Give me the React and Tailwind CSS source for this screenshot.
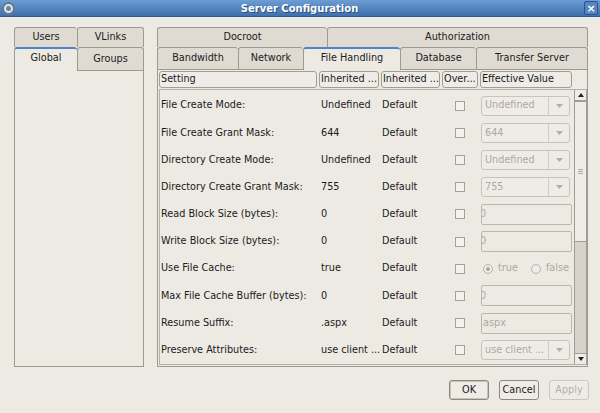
import React from 'react';

const rows = [
  { label: 'File Create Mode:', inherited: 'Undefined', kind: 'combo', value: 'Undefined' },
  { label: 'File Create Grant Mask:', inherited: '644', kind: 'combo', value: '644' },
  { label: 'Directory Create Mode:', inherited: 'Undefined', kind: 'combo', value: 'Undefined' },
  { label: 'Directory Create Grant Mask:', inherited: '755', kind: 'combo', value: '755' },
  { label: 'Read Block Size (bytes):', inherited: '0', kind: 'text', value: '0' },
  { label: 'Write Block Size (bytes):', inherited: '0', kind: 'text', value: '0' },
  { label: 'Use File Cache:', inherited: 'true', kind: 'radio' },
  { label: 'Max File Cache Buffer (bytes):', inherited: '0', kind: 'text', value: '0' },
  { label: 'Resume Suffix:', inherited: '.aspx', kind: 'text', value: '.aspx' },
  { label: 'Preserve Attributes:', inherited: 'use client ...', kind: 'combo', value: 'use client ...' },
];

// Unselected / selected notebook tabs
const Tab = ({ label, width, height, selected, last }) => (
  <div
    className={
      'flex items-center justify-center border-t border-l border-[#9f9a90] rounded-t-[3px] ' +
      (last ? 'border-r ' : '') +
      (selected
        ? 'relative z-10 -mb-px bg-[#edeae4] border-t-2 border-t-[#4f85c6] pb-[3px]'
        : 'bg-[#dfdbd3]')
    }
    style={{ width, height: selected ? height + 1 : height }}
  >
    {label}
  </div>
);

const HeaderCell = ({ label, width }) => (
  <div
    className="h-[17px] flex items-center pl-[1px] border border-[#a29d93] rounded-[3px] bg-[#efece7] overflow-hidden whitespace-nowrap"
    style={{ width }}
  >
    {label}
  </div>
);

const Combo = ({ value }) => (
  <div className="w-[89px] h-[20px] flex border border-[#c9c4ba] rounded-[3px] bg-[#efece7] text-[#aca89e]">
    <div className="flex-1 flex items-center pl-[3px] overflow-hidden whitespace-nowrap">{value}</div>
    <div className="w-[21px] flex items-center justify-center border-l border-[#d2cdc4]">
      <svg width="7" height="4" viewBox="0 0 7 4">
        <path d="M0 0h7L3.5 4z" fill="#b3aea4" />
      </svg>
    </div>
  </div>
);

const TextBox = ({ value }) => (
  <div className="w-[91px] h-[21px] flex items-center border border-[#bcb7ac] rounded-[2px] bg-[#edeae4] text-[#aca89e] overflow-hidden whitespace-nowrap">
    <span className="-ml-[2px]">{value}</span>
  </div>
);

const Radio = ({ on }) => (
  <div className="w-[10px] h-[10px] rounded-full border border-[#b9b4aa] flex items-center justify-center bg-[#efece7]">
    {on && <div className="w-[4px] h-[4px] rounded-full bg-[#aca89e]" />}
  </div>
);

const Row = ({ row }) => (
  <div className="h-[27.2px] flex items-center whitespace-nowrap">
    <div className="w-[160px] pl-px">{row.label}</div>
    <div className="w-[61px] pl-px overflow-hidden">{row.inherited}</div>
    <div className="w-[61px] pl-px">Default</div>
    <div className="w-[38px] pl-[13px]">
      <div className="w-[10px] h-[10px] border border-[#a7a297] bg-[#f4f2ee]" />
    </div>
    <div className="pl-[1px]">
      {row.kind === 'combo' && <Combo value={row.value} />}
      {row.kind === 'text' && <TextBox value={row.value} />}
      {row.kind === 'radio' && (
        <div className="flex items-center text-[#aca89e] pl-[2px]">
          <Radio on />
          <span className="ml-[5px]">true</span>
          <div className="ml-[13px]"><Radio /></div>
          <span className="ml-[5px]">false</span>
        </div>
      )}
    </div>
  </div>
);

const ScrollArrow = ({ up }) => (
  <div className="h-[10px] flex items-center justify-center bg-[#efece7]">
    <svg width="6" height="4" viewBox="0 0 6 4">
      <path d={up ? 'M0 4h6L3 0z' : 'M0 0h6L3 4z'} fill="#222" />
    </svg>
  </div>
);

const Button = ({ label, disabled, isDefault }) => (
  <div
    className={
      'h-[20px] w-[40px] flex items-center justify-center rounded-[3px] border bg-[#efece7] ' +
      (disabled
        ? 'border-[#cdc8bf] text-[#b3afa6]'
        : isDefault
          ? 'border-[#8e897f] shadow-[inset_0_0_0_1px_#c9c4ba]'
          : 'border-[#8e897f]')
    }
  >
    {label}
  </div>
);

export default function App() {
  return (
    <div
      className="w-[600px] h-[413px] bg-[#edeae4] text-[#1a1a1a] text-[9.7px] overflow-hidden"
      style={{ fontFamily: '"DejaVu Sans", Verdana, sans-serif' }}
    >
      {/* Title bar */}
      <div className="h-[17px] flex items-center bg-gradient-to-b from-[#6d9dd4] to-[#3f70ad] border-b border-[#2f5a92] px-[2px]">
        <div className="w-[13px] h-[13px] rounded-full bg-[#dfe5ec] border-2 border-[#6b7785] flex items-center justify-center">
          <div className="w-[5px] h-[5px] rounded-full bg-[#5b86b8]" />
        </div>
        <div className="flex-1 text-center text-white font-bold text-[10px] [text-shadow:1px_1px_0_#2b4f7e]">
          Server Configuration
        </div>
        <div className="w-[14px] h-[14px] rounded-[2px] border border-[#2d5288] bg-[#5686c1] flex items-center justify-center text-white font-bold text-[11px] leading-none">
          ×
        </div>
      </div>

      {/* Body */}
      <div className="flex pt-[10px] pl-[14px]">
        {/* Left notebook */}
        <div className="w-[130px] flex flex-col">
          <div className="flex">
            <Tab label="Users" width={63} height={20} />
            <Tab label="VLinks" width={67} height={20} last />
          </div>
          <div className="flex items-end h-[23px]">
            <Tab label="Global" width={63} height={23} selected />
            <Tab label="Groups" width={67} height={23} last />
          </div>
          <div className="h-[297px] border border-[#9f9a90] bg-[#edeae4]" />
        </div>

        {/* Right notebook */}
        <div className="w-[431px] ml-[13px] flex flex-col">
          <div className="flex">
            <Tab label="Docroot" width={170} height={20} />
            <Tab label="Authorization" width={261} height={20} last />
          </div>
          <div className="flex items-end h-[22px]">
            <Tab label="Bandwidth" width={81} height={22} />
            <Tab label="Network" width={65} height={22} />
            <Tab label="File Handling" width={97} height={22} selected />
            <Tab label="Database" width={76} height={22} />
            <Tab label="Transfer Server" width={112} height={22} last />
          </div>
          <div className="h-[298px] border border-[#9f9a90] bg-[#edeae4] flex flex-col pl-px pt-px">
            {/* Table header */}
            <div className="flex h-[17px] gap-[2px]">
              <HeaderCell label="Setting" width={158} />
              <HeaderCell label="Inherited ..." width={60} />
              <HeaderCell label="Inherited ..." width={59} />
              <HeaderCell label="Over..." width={36} />
              <HeaderCell label="Effective Value" width={92} />
            </div>
            {/* Viewport */}
            <div className="flex-1 flex mt-px mb-px border-t border-l border-b border-[#b5b0a5]">
              <div className="flex-1 flex flex-col pt-[2px]">
                {rows.map((r) => (
                  <Row key={r.label} row={r} />
                ))}
              </div>
              <div className="w-[13px] flex flex-col border-l border-r border-[#a29d93] bg-[#d8d3ca]">
                <ScrollArrow up />
                <div className="h-[142px] border-t-2 border-b border-[#a29d93] bg-[#efece7] flex items-center justify-center">
                  <div className="flex flex-col gap-[1px]">
                    <div className="w-[5px] h-px bg-[#b0aba1]" />
                    <div className="w-[5px] h-px bg-[#b0aba1]" />
                    <div className="w-[5px] h-px bg-[#b0aba1]" />
                  </div>
                </div>
                <div className="flex-1" />
                <div className="border-t border-[#a29d93]">
                  <ScrollArrow />
                </div>
              </div>
            </div>
          </div>
        </div>
      </div>

      {/* Dialog buttons */}
      <div className="flex justify-end gap-[10px] pr-[11px] mt-[13px]">
        <Button label="OK" isDefault />
        <Button label="Cancel" />
        <Button label="Apply" disabled />
      </div>
    </div>
  );
}
